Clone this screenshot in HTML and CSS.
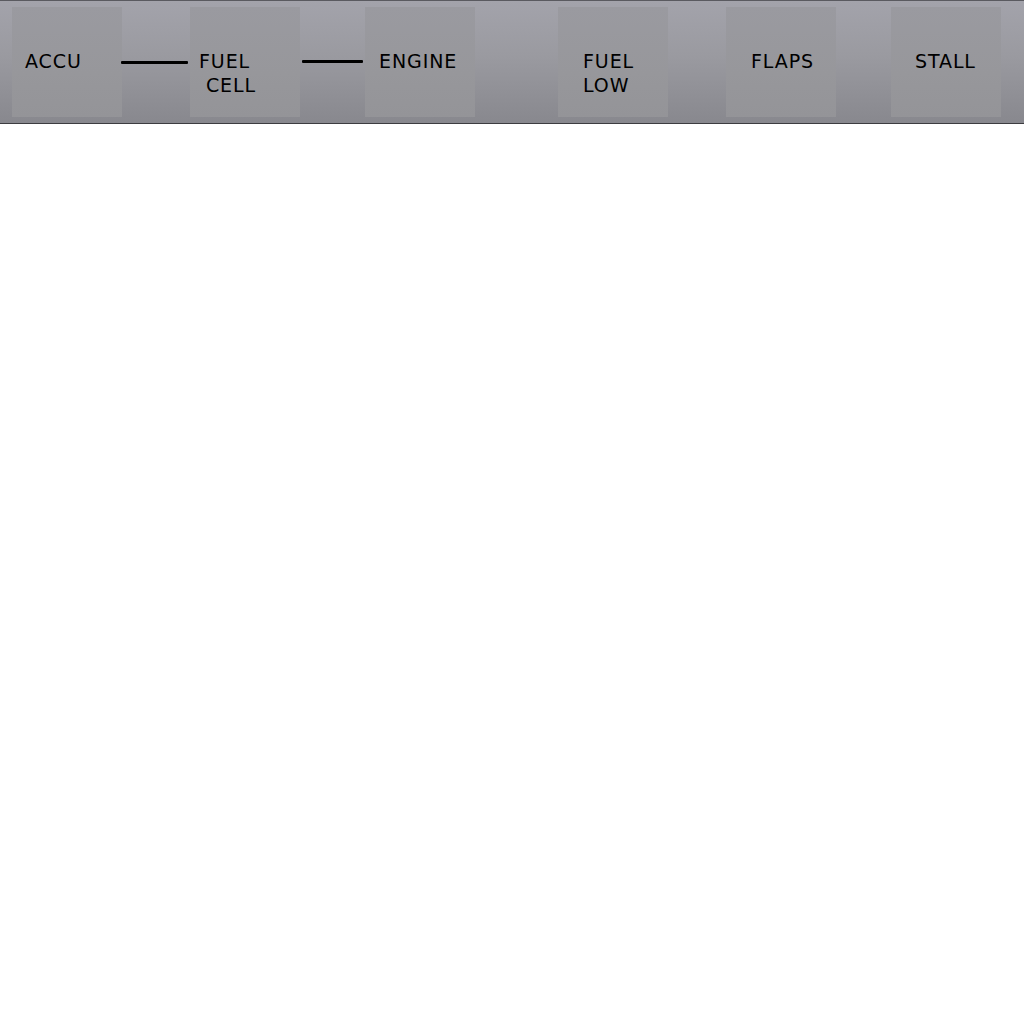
FILE: index.html
```html
<!DOCTYPE html>
<html>
<head>
<meta charset="utf-8">
<link rel="stylesheet" href="styles.css">
</head>
<body>
<div class="bar">
  <div class="box p13">ACCU</div>
  <div class="gap"><div class="wire w1"></div></div>
  <div class="box p9">FUEL<br> CELL</div>
  <div class="gap"><div class="wire w2"></div></div>
  <div class="box p14">ENGINE</div>
  <div class="gap"></div>
  <div class="box p25">FUEL<br>LOW</div>
  <div class="gap"></div>
  <div class="box p25">FLAPS</div>
  <div class="gap"></div>
  <div class="box p24">STALL</div>
</div>
</body>
</html>
```
FILE: styles.css
```css
html, body {
  margin: 0;
  padding: 0;
  background: #ffffff;
}
.bar {
  display: grid;
  grid-template-columns: 110px 68px 110px 65px 110px 83px 110px 58px 110px 55px 110px;
  padding: 6px 0 6px 12px;
  height: 110px;
  border-top: 1px solid #5a5a60;
  border-bottom: 1px solid #3c3c40;
  background: linear-gradient(to bottom, #a3a3ab 0%, #9a9aa0 45%, #88888e 100%);
  font-family: "DejaVu Sans", sans-serif;
  font-size: 19px;
  line-height: 24px;
  color: #000;
}
.box {
  height: 110px;
  box-sizing: border-box;
  padding-top: 42px;
  background: linear-gradient(to bottom, #9a9aa0 0%, #97979b 60%, #949498 100%);
  white-space: pre;
  letter-spacing: 0.9px;
}
.p13 { padding-left: 13px; }
.p9 { padding-left: 9px; }
.p14 { padding-left: 14px; }
.p24 { padding-left: 24px; }
.p25 { padding-left: 25px; }
.gap {
  position: relative;
}
.wire {
  position: absolute;
  height: 3px;
  background: #000;
  border-radius: 1px;
}
.w1 { left: -1px; right: 2px; top: 54px; }
.w2 { left: 2px; right: 2px; top: 53px; }
```
